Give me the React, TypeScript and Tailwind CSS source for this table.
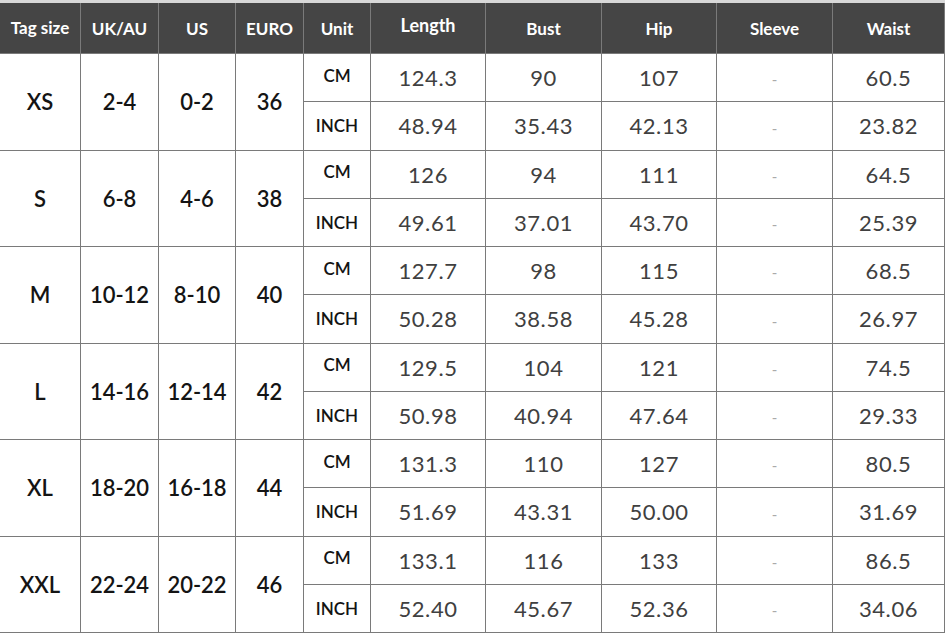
const headers = [
  "Tag size",
  "UK/AU",
  "US",
  "EURO",
  "Unit",
  "Length",
  "Bust",
  "Hip",
  "Sleeve",
  "Waist",
];

type SizeRow = {
  tag: string;
  uk: string;
  us: string;
  euro: string;
  cm: string[];
  inch: string[];
};

const sizes: SizeRow[] = [
  { tag: "XS", uk: "2-4", us: "0-2", euro: "36", cm: ["124.3", "90", "107", "-", "60.5"], inch: ["48.94", "35.43", "42.13", "-", "23.82"] },
  { tag: "S", uk: "6-8", us: "4-6", euro: "38", cm: ["126", "94", "111", "-", "64.5"], inch: ["49.61", "37.01", "43.70", "-", "25.39"] },
  { tag: "M", uk: "10-12", us: "8-10", euro: "40", cm: ["127.7", "98", "115", "-", "68.5"], inch: ["50.28", "38.58", "45.28", "-", "26.97"] },
  { tag: "L", uk: "14-16", us: "12-14", euro: "42", cm: ["129.5", "104", "121", "-", "74.5"], inch: ["50.98", "40.94", "47.64", "-", "29.33"] },
  { tag: "XL", uk: "18-20", us: "16-18", euro: "44", cm: ["131.3", "110", "127", "-", "80.5"], inch: ["51.69", "43.31", "50.00", "-", "31.69"] },
  { tag: "XXL", uk: "22-24", us: "20-22", euro: "46", cm: ["133.1", "116", "133", "-", "86.5"], inch: ["52.40", "45.67", "52.36", "-", "34.06"] },
];

function ValueCell({ value }: { value: string }) {
  if (value === "-") {
    return (
      <div className="flex items-center justify-center bg-white pt-1 text-[15px] text-[#aaa]">
        -
      </div>
    );
  }
  return (
    <div className="flex items-center justify-center bg-white text-[22px] tracking-[0.6px] text-[#404040]">
      {value}
    </div>
  );
}

export default function App() {
  return (
    <div
      className="h-[633px] w-[947px] bg-white"
      style={{ fontFamily: "Lato, 'Open Sans', sans-serif" }}
    >
      <div className="h-[3px] w-[945px] bg-[#d8d8d8]" />
      <div className="grid h-[630px] w-[945px] grid-cols-[80px_77px_76px_67px_66px_114px_115px_114px_115px_111px] grid-rows-[50px_repeat(12,1fr)] gap-px bg-[#7a7a7a] pr-px pb-px">
        {headers.map((h) => (
          <div
            key={h}
            className={`flex items-center justify-center bg-[#454545] font-bold text-white ${
              h === "Length" ? "pb-1.5 text-[18px]" : h === "Tag size" ? "text-[17px]" : "pt-0.5 text-[17px]"
            }`}
          >
            {h}
          </div>
        ))}
        {sizes.map((s) => (
          <SizeGroup key={s.tag} size={s} />
        ))}
      </div>
    </div>
  );
}

function SizeGroup({ size }: { size: SizeRow }) {
  const big = "row-span-2 flex items-center justify-center bg-white text-[22px] font-semibold text-[#141414]";
  return (
    <>
      <div className={big}>{size.tag}</div>
      <div className={big}>{size.uk}</div>
      <div className={big}>{size.us}</div>
      <div className={big}>{size.euro}</div>
      <div className="flex items-center justify-center bg-white pb-1 text-[17px] font-semibold text-[#141414]">
        CM
      </div>
      {size.cm.map((v, i) => (
        <ValueCell key={"cm" + i} value={v} />
      ))}
      <div className="flex items-center justify-center bg-white text-[17px] font-semibold text-[#141414]">
        INCH
      </div>
      {size.inch.map((v, i) => (
        <ValueCell key={"in" + i} value={v} />
      ))}
    </>
  );
}
